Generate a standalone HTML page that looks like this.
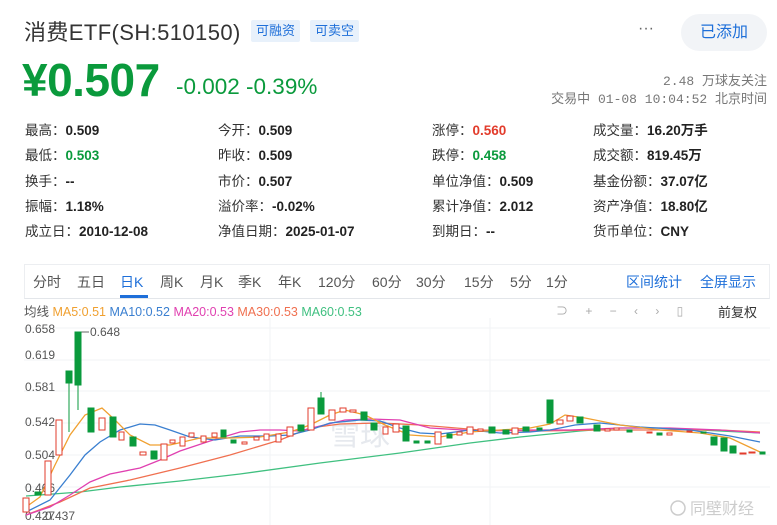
<!DOCTYPE html>
<html><head><meta charset="utf-8"><style>
*{margin:0;padding:0;box-sizing:border-box}
body{width:777px;height:525px;background:#fff;font-family:"Liberation Sans","Noto Sans CJK SC",sans-serif;position:relative;overflow:hidden;color:#333}
.a{position:absolute;white-space:nowrap}
.tag{position:absolute;top:20px;height:22px;line-height:22px;font-size:13px;color:#1e6fd9;background:#e8f1fb;padding:0 5px;border-radius:2px}
.st{position:absolute;font-size:13.5px;color:#333}
.st b{color:#222}
.g{color:#0a9a3c!important}.r{color:#e23b2b!important}
.tab{position:absolute;top:272px;font-size:14px;color:#555}
</style></head><body>
<div class="a" style="left:24px;top:15px;font-size:22px;color:#333;letter-spacing:0.4px">消费ETF(SH:510150)</div>
<div class="tag" style="left:251px">可融资</div>
<div class="tag" style="left:310px">可卖空</div>
<div class="a" style="left:638px;top:20px;font-size:16px;color:#666">···</div>
<div class="a" style="left:681px;top:14px;width:86px;height:37px;border-radius:19px;background:#f2f4f7;color:#1e6fd9;font-size:16px;text-align:center;line-height:37px">已添加</div>
<div class="a" style="left:22px;top:53px;font-size:46px;font-weight:bold;color:#0a9a3c;letter-spacing:-0.5px">¥0.507</div>
<div class="a" style="left:176px;top:74px;font-size:22.5px;color:#0a9a3c">-0.002 -0.39%</div>
<div class="a" style="right:10px;top:70px;font-size:13px;color:#777;font-family:'Liberation Mono','Noto Sans CJK SC',monospace">2.48 万球友关注</div>
<div class="a" style="right:10px;top:88px;font-size:13px;color:#777;font-family:'Liberation Mono','Noto Sans CJK SC',monospace">交易中 01-08 10:04:52 北京时间</div>

<div class="st" style="left:25px;top:119px">最高：<b>0.509</b></div>
<div class="st" style="left:25px;top:144px">最低：<b class="g">0.503</b></div>
<div class="st" style="left:25px;top:170px">换手：<b>--</b></div>
<div class="st" style="left:25px;top:195px">振幅：<b>1.18%</b></div>
<div class="st" style="left:25px;top:220px">成立日：<b>2010-12-08</b></div>
<div class="st" style="left:218px;top:119px">今开：<b>0.509</b></div>
<div class="st" style="left:218px;top:144px">昨收：<b>0.509</b></div>
<div class="st" style="left:218px;top:170px">市价：<b>0.507</b></div>
<div class="st" style="left:218px;top:195px">溢价率：<b>-0.02%</b></div>
<div class="st" style="left:218px;top:220px">净值日期：<b>2025-01-07</b></div>
<div class="st" style="left:432px;top:119px">涨停：<b class="r">0.560</b></div>
<div class="st" style="left:432px;top:144px">跌停：<b class="g">0.458</b></div>
<div class="st" style="left:432px;top:170px">单位净值：<b>0.509</b></div>
<div class="st" style="left:432px;top:195px">累计净值：<b>2.012</b></div>
<div class="st" style="left:432px;top:220px">到期日：<b>--</b></div>
<div class="st" style="left:593px;top:119px">成交量：<b>16.20万手</b></div>
<div class="st" style="left:593px;top:144px">成交额：<b>819.45万</b></div>
<div class="st" style="left:593px;top:170px">基金份额：<b>37.07亿</b></div>
<div class="st" style="left:593px;top:195px">资产净值：<b>18.80亿</b></div>
<div class="st" style="left:593px;top:220px">货币单位：<b>CNY</b></div>

<div class="a" style="left:24px;top:264px;width:746px;height:35px;border:1px solid #eceef1;border-bottom:1px solid #e3e6ea"></div>
<div class="tab" style="left:33px">分时</div>
<div class="tab" style="left:77px">五日</div>
<div class="tab" style="left:120px;color:#1e6fd9">日K</div>
<div class="a" style="left:120px;top:295px;width:28px;height:3px;background:#1e6fd9"></div>
<div class="tab" style="left:160px">周K</div>
<div class="tab" style="left:200px">月K</div>
<div class="tab" style="left:238px">季K</div>
<div class="tab" style="left:278px">年K</div>
<div class="tab" style="left:318px">120分</div>
<div class="tab" style="left:372px">60分</div>
<div class="tab" style="left:416px">30分</div>
<div class="tab" style="left:464px">15分</div>
<div class="tab" style="left:510px">5分</div>
<div class="tab" style="left:546px">1分</div>
<div class="tab" style="left:626px;color:#1e6fd9">区间统计</div>
<div class="tab" style="left:700px;color:#1e6fd9">全屏显示</div>

<div class="a" style="left:24px;top:301px;font-size:12.5px;color:#555">均线 <span style="color:#f0a030">MA5:0.51</span> <span style="color:#3a7fd0">MA10:0.52</span> <span style="color:#e040b0">MA20:0.53</span> <span style="color:#f07050">MA30:0.53</span> <span style="color:#40c080">MA60:0.53</span></div>
<div class="a" style="left:556px;top:302px;font-size:12px;color:#aaa;word-spacing:14px">⊃ + − ‹ › ▯</div>
<div class="a" style="left:718px;top:302px;font-size:13px;color:#333">前复权</div>

<svg class="a" style="left:0;top:318px" width="777" height="207" viewBox="0 318 777 207">
<g stroke="#f2f3f5" stroke-width="1">
<line x1="24" y1="328" x2="770" y2="328"/><line x1="24" y1="360" x2="770" y2="360"/><line x1="24" y1="391" x2="770" y2="391"/><line x1="24" y1="423" x2="770" y2="423"/><line x1="24" y1="455" x2="770" y2="455"/><line x1="24" y1="487" x2="770" y2="487"/>
<line x1="270" y1="318" x2="270" y2="525"/><line x1="490" y1="318" x2="490" y2="525"/>
</g>
<g font-size="12" fill="#555" font-family="Liberation Sans,sans-serif">
<text x="25" y="333">0.658</text><text x="25" y="359">0.619</text><text x="25" y="391">0.581</text><text x="25" y="426">0.542</text><text x="25" y="459">0.504</text><text x="25" y="492">0.466</text><text x="25" y="520">0.427</text><text x="45" y="520">0.437</text>
<text x="90" y="336">0.648</text></g>
<line x1="81" y1="332" x2="89" y2="332" stroke="#666"/>
<text x="330" y="445" font-size="30" fill="#e6e9ee" font-family="Noto Sans CJK SC,sans-serif">雪球</text>
<text x="690" y="514" font-size="16" fill="#ccc" font-family="Noto Sans CJK SC,sans-serif">同壁财经</text>
<circle cx="678" cy="508" r="7" fill="none" stroke="#ccc" stroke-width="1.5"/>
<g fill="none" stroke-width="1.3">
<polyline stroke="#40c080" points="26,496 80,492 120,487 180,481 240,474 320,463 400,453 470,443 520,437 580,431 620,428 660,428 720,431 760,433"/>
<polyline stroke="#f07050" points="26,515 60,502 90,488 130,480 180,468 230,455 280,440 310,428 340,424 380,423 420,425 480,430 540,431 600,430 660,430 720,430 760,432"/>
<polyline stroke="#e040b0" points="26,515 50,507 70,495 90,482 110,474 140,468 160,460 180,451 210,441 240,432 260,430 280,430 300,431 320,426 345,420 370,419 400,420 430,428 480,431 530,430 570,430 620,428 670,428 720,430 760,433"/>
<polyline stroke="#3a7fd0" points="26,512 50,500 70,475 85,455 100,442 120,430 140,424 155,425 170,430 190,437 215,440 240,436 270,436 290,435 310,430 330,423 360,420 380,421 400,428 420,433 440,434 470,430 500,433 530,432 550,430 575,425 600,423 640,427 690,430 730,436 760,442"/>
<polyline stroke="#f0a030" points="26,507 40,497 55,465 70,435 85,415 102,408 115,420 130,435 150,445 170,445 200,438 230,438 260,437 290,432 310,425 330,415 345,410 365,415 385,425 410,435 440,437 470,432 500,430 530,428 550,424 565,415 585,418 620,425 660,430 700,433 730,438 760,452"/>
</g>
<g stroke-width="1">
<g fill="#fff" stroke="#e23b2b">
<rect x="23" y="498" width="6" height="14"/><rect x="45" y="461" width="6" height="34"/><rect x="56" y="420" width="6" height="35"/>
<rect x="99" y="418" width="6" height="12"/><rect x="119" y="432" width="5" height="8"/><rect x="140" y="452" width="6" height="3"/>
<rect x="161" y="444" width="6" height="16"/><rect x="170" y="440" width="5" height="3"/><rect x="180" y="437" width="5" height="9"/>
<rect x="189" y="433" width="5" height="4"/><rect x="201" y="436" width="5" height="6"/><rect x="212" y="433" width="5" height="4"/>
<rect x="242" y="442" width="5" height="2"/><rect x="254" y="437" width="5" height="3"/><rect x="264" y="434" width="5" height="6"/>
<rect x="276" y="434" width="5" height="8"/><rect x="287" y="427" width="6" height="9"/><rect x="308" y="408" width="6" height="22"/>
<rect x="329" y="410" width="6" height="10"/><rect x="340" y="408" width="6" height="4"/><rect x="350" y="410" width="6" height="2"/>
<rect x="383" y="427" width="5" height="7"/><rect x="393" y="424" width="6" height="8"/><rect x="435" y="432" width="6" height="12"/>
<rect x="457" y="432" width="5" height="3"/><rect x="467" y="427" width="6" height="7"/><rect x="478" y="429" width="5" height="2"/>
<rect x="512" y="428" width="6" height="6"/><rect x="557" y="420" width="6" height="4"/><rect x="567" y="416" width="6" height="5"/>
<rect x="605" y="429" width="5" height="2"/><rect x="614" y="428" width="5" height="2"/><rect x="647" y="432" width="5" height="1"/>
<rect x="667" y="433" width="5" height="2"/><rect x="687" y="431" width="5" height="1"/><rect x="740" y="453" width="6" height="1"/><rect x="749" y="452" width="6" height="1"/>
</g>
<g fill="#0a9a3c" stroke="#0a9a3c">
<line x1="69" y1="371" x2="69" y2="432"/><line x1="78" y1="332" x2="78" y2="410"/><line x1="321" y1="392" x2="321" y2="414"/>
<rect x="35" y="492" width="6" height="3"/><rect x="66" y="371" width="6" height="12"/><rect x="75" y="332" width="6" height="53"/>
<rect x="88" y="408" width="6" height="24"/><rect x="110" y="417" width="6" height="20"/><rect x="130" y="437" width="6" height="9"/>
<rect x="151" y="451" width="6" height="8"/><rect x="221" y="430" width="5" height="7"/><rect x="231" y="440" width="5" height="3"/>
<rect x="298" y="425" width="6" height="6"/><rect x="318" y="398" width="6" height="16"/><rect x="361" y="412" width="6" height="8"/>
<rect x="371" y="423" width="6" height="7"/><rect x="403" y="426" width="6" height="15"/><rect x="414" y="441" width="5" height="2"/>
<rect x="425" y="441" width="5" height="2"/><rect x="447" y="434" width="5" height="4"/><rect x="489" y="427" width="6" height="6"/>
<rect x="503" y="430" width="6" height="4"/><rect x="523" y="427" width="6" height="4"/><rect x="537" y="428" width="5" height="2"/>
<rect x="547" y="400" width="6" height="23"/><rect x="577" y="417" width="6" height="6"/><rect x="594" y="425" width="6" height="6"/>
<rect x="627" y="430" width="5" height="2"/><rect x="657" y="433" width="5" height="2"/><rect x="701" y="432" width="5" height="1"/>
<rect x="711" y="437" width="6" height="8"/><rect x="721" y="438" width="6" height="13"/><rect x="730" y="446" width="6" height="7"/><rect x="760" y="452" width="5" height="2"/>
</g>
</g>
</svg>
</body></html>
